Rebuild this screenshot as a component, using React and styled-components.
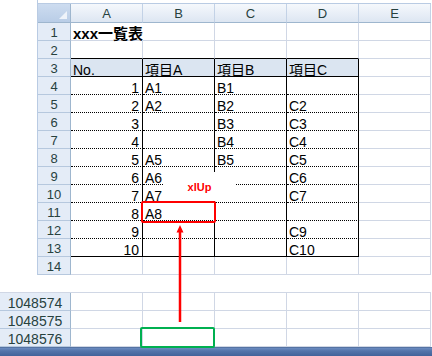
import React from 'react';
import styled, { createGlobalStyle } from 'styled-components';

const GlobalStyle = createGlobalStyle`
  html, body { margin: 0; padding: 0; background: #fff; }
  body { font-family: "Liberation Sans", "Noto Sans CJK JP", sans-serif; }
`;

const GRID = '#d0d7e5';
const HEAD_LINE = '#9eb6ce';

const Page = styled.div`
  position: relative;
  width: 432px;
  height: 356px;
  overflow: hidden;
  background: #fff;
  display: flex;
  flex-direction: column;
`;

const UpperSheet = styled.div`
  margin-left: 37px;
  display: flex;
  flex-direction: column;
`;

const TopStrip = styled.div`
  height: 3px;
  border-left: 1px solid #b9cbe3;
`;

const SheetGrid = styled.div`
  display: grid;
  width: max-content;
  grid-template-columns: ${(p) => p.$head}px repeat(5, 72px);
  ${(p) => (p.$withHeader ? 'grid-template-rows: 19px;' : '')}
  grid-auto-rows: 18px;
  border-top: 1px solid ${(p) => p.$topColor};
  ${(p) => (p.$leftLine ? `border-left: 1px solid ${p.$leftLine};` : '')}
  margin-top: ${(p) => p.$gap || 0}px;
  background: #fff;
`;

const Corner = styled.div`
  display: flex;
  align-items: flex-end;
  justify-content: flex-end;
  padding: 0 3px 3px 0;
  background: linear-gradient(#cddcf0, #b9cde7);
  border-right: 1px solid ${HEAD_LINE};
  border-bottom: 1px solid ${HEAD_LINE};
`;

const ColHead = styled.div`
  display: flex;
  align-items: flex-end;
  justify-content: center;
  padding-bottom: 2px;
  background: linear-gradient(#f5f8fc, #dde6f2);
  border-right: 1px solid #c3d2e6;
  border-bottom: 1px solid ${HEAD_LINE};
  color: #27413e;
  font-size: 13px;
  line-height: 12px;
`;

const RowHead = styled.div`
  display: flex;
  align-items: flex-end;
  justify-content: center;
  padding-bottom: 1px;
  background: #e4ecf7;
  border-right: 1px solid ${HEAD_LINE};
  border-bottom: 1px solid ${(p) => (p.$blank ? '#fff' : '#b6c8de')};
  color: #27413e;
  font-size: ${(p) => (p.$wide ? 14 : 13)}px;
  line-height: 12px;
`;

const LINE = {
  grid: `1px solid ${GRID}`,
  solid: '1px solid #000',
  dotted: '1px dotted #000',
  none: '1px solid transparent',
};

const Cell = styled.div`
  position: relative;
  z-index: ${(p) => (p.$bold ? 1 : 0)};
  display: flex;
  align-items: flex-end;
  justify-content: ${(p) => (p.$align === 'right' ? 'flex-end' : 'flex-start')};
  padding: 0 3px 0 2px;
  font-size: ${(p) => (p.$bold ? 15 : 14)}px;
  font-weight: ${(p) => (p.$bold ? 700 : 400)};
  line-height: 12px;
  color: #000;
  white-space: nowrap;
  background: ${(p) => p.$fill || 'transparent'};
  border-right: ${(p) => LINE[p.$right]};
  border-bottom: ${(p) => LINE[p.$bottom]};
`;

const BottomBar = styled.div`
  height: 10px;
  flex-shrink: 0;
  background: linear-gradient(#3f5b86 0, #6a8bc0 1px, #5474aa 4px, #3e5f97 100%);
`;

const Callout = styled.div`
  position: absolute;
  left: 163px;
  top: 172px;
  width: 73px;
  height: 29px;
  background: #fff;
  display: flex;
  align-items: center;
  justify-content: center;
  color: #ff0000;
  font-size: 11px;
  font-weight: 700;
`;

const Frame = styled.div`
  position: absolute;
  left: ${(p) => p.$x}px;
  top: ${(p) => p.$y}px;
  width: ${(p) => p.$w}px;
  height: ${(p) => p.$h}px;
  box-sizing: border-box;
  border: 2px solid ${(p) => p.$color};
  border-radius: 2px;
`;

const ArrowSvg = styled.svg`
  position: absolute;
  left: 174px;
  top: 222px;
`;

const data = {
  3: ['No.', '項目A', '項目B', '項目C'],
  4: ['1', 'A1', 'B1', ''],
  5: ['2', 'A2', 'B2', 'C2'],
  6: ['3', '', 'B3', 'C3'],
  7: ['4', '', 'B4', 'C4'],
  8: ['5', 'A5', 'B5', 'C5'],
  9: ['6', 'A6', '', 'C6'],
  10: ['7', 'A7', '', 'C7'],
  11: ['8', 'A8', '', ''],
  12: ['9', '', '', 'C9'],
  13: ['10', '', '', 'C10'],
};

function cellProps(r, c) {
  const inTable = r >= 3 && r <= 13 && c <= 3;
  let right = inTable ? 'solid' : 'grid';
  if (r === 1 && c === 0) right = 'none';
  let bottom = 'grid';
  if (c <= 3) {
    if (r === 2 || r === 3 || r === 13) bottom = 'solid';
    else if (r >= 4 && r <= 12) bottom = 'dotted';
  }
  const fill = r === 3 && c <= 3 ? '#dbe5f1' : undefined;
  let text = '';
  let align = 'left';
  let bold = false;
  if (r === 1 && c === 0) {
    text = 'xxx一覧表';
    bold = true;
  } else if (data[r] && c <= 3) {
    text = data[r][c];
    if (c === 0 && r >= 4) align = 'right';
  }
  return { right, bottom, fill, text, align, bold };
}

const COLS = ['A', 'B', 'C', 'D', 'E'];

function Row({ label, r, wide }) {
  return (
    <>
      <RowHead $wide={wide}>{label}</RowHead>
      {COLS.map((_, c) => {
        const p = cellProps(r, c);
        return (
          <Cell
            key={c}
            $right={p.right}
            $bottom={p.bottom}
            $fill={p.fill}
            $align={p.align}
            $bold={p.bold}
          >
            {p.text}
          </Cell>
        );
      })}
    </>
  );
}

export default function App() {
  const rows = Array.from({ length: 14 }, (_, i) => i + 1);
  return (
    <Page>
      <GlobalStyle />
      <UpperSheet>
        <TopStrip />
        <SheetGrid $head={33} $withHeader $topColor="#b9cbe3" $leftLine="#b9cbe3">
          <Corner>
            <svg width="8" height="8" viewBox="0 0 8 8">
              <polygon points="8,0 8,8 0,8" fill="#eef3fa" />
            </svg>
          </Corner>
          {COLS.map((c) => (
            <ColHead key={c}>{c}</ColHead>
          ))}
          {rows.map((r) => (
            <Row key={r} r={r} label={r} />
          ))}
        </SheetGrid>
      </UpperSheet>
      <SheetGrid $head={71} $topColor={GRID} $gap={17}>
        {['1048574', '1048575', '1048576'].map((l) => (
          <Row key={l} r={99} label={l} wide />
        ))}
      </SheetGrid>
      <BottomBar />

      <Callout>xlUp</Callout>
      <Frame $x={141} $y={201} $w={75} $h={22} $color="#ff0000" />
      <ArrowSvg width="12" height="102" viewBox="0 0 12 102">
        <line x1="6" y1="9" x2="6" y2="100" stroke="#ff0000" strokeWidth="2.5" />
        <polygon points="6,3 2.5,10.5 9.5,10.5" fill="#ff0000" />
      </ArrowSvg>
      <Frame $x={140} $y={327} $w={75} $h={21} $color="#00b050" />
    </Page>
  );
}
